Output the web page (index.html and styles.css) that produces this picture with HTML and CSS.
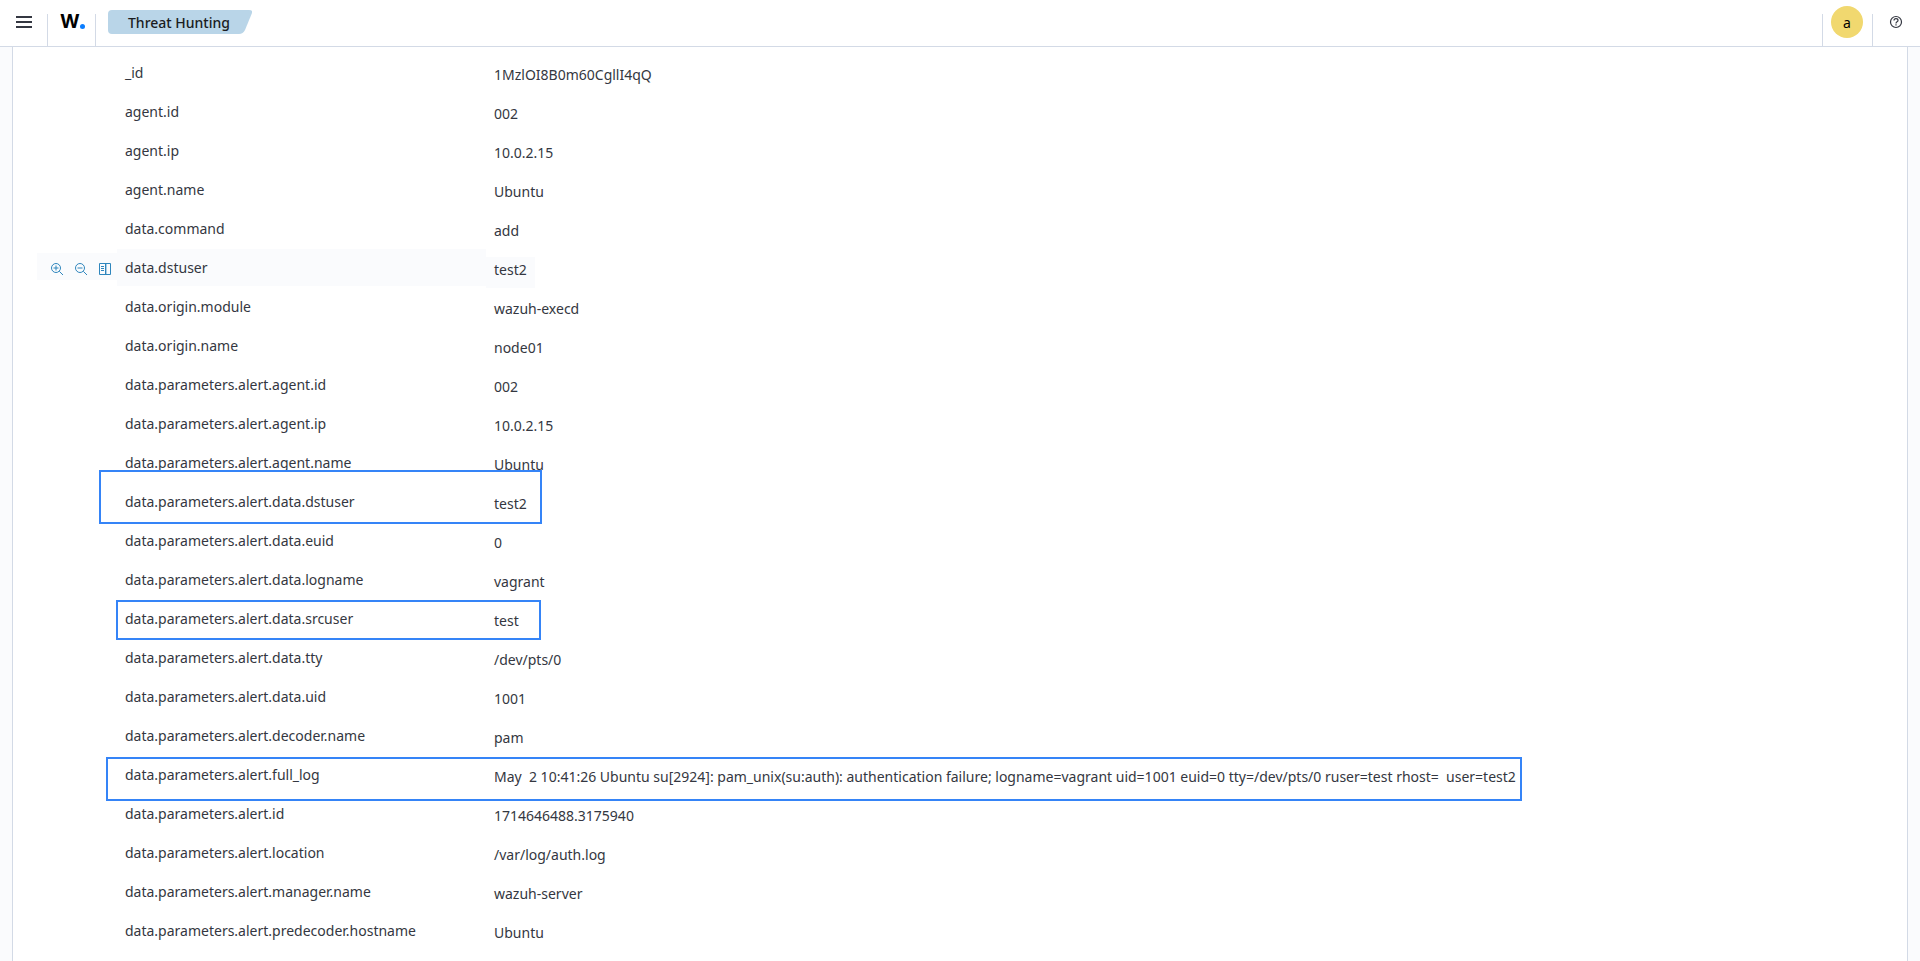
FILE: index.html
```
<!DOCTYPE html>
<html lang="en">
<head>
  <meta charset="UTF-8">
  <title>Threat Hunting</title>
  <link rel="stylesheet" href="styles.css">
</head>
<body>
  <!-- Top bar -->
  <header class="header">
    <div class="header-item header-menu">
      <button class="icon-button" type="button" aria-label="Toggle navigation">
        <svg width="16" height="16" viewBox="0 0 16 16" fill="#343741">
          <path d="M0 2h16v2H0zM0 7h16v2H0zM0 12h16v2H0z"/>
        </svg>
      </button>
    </div>
    <div class="header-item header-logo">
      <a class="logo" href="#" aria-label="Home">W<span class="logo-dot"></span></a>
    </div>
    <nav class="breadcrumbs">
      <a class="breadcrumb" href="#" aria-current="page">
        <svg class="breadcrumb-shape" width="144" height="24" viewBox="0 0 144 24" fill="#b9d5e8">
          <path d="M4 0h137q4 0 3 3l-7 17q-2 4-6 4H4q-4 0-4-4V4q0-4 4-4z"/>
        </svg>
        <span class="breadcrumb-text">Threat Hunting</span>
      </a>
    </nav>
    <div class="header-item header-user">
      <button class="avatar" type="button" aria-label="Account menu">a</button>
    </div>
    <div class="header-item header-help">
      <button class="icon-button" type="button" aria-label="Help menu">
        <svg width="16" height="16" viewBox="0 0 16 16" fill="none" stroke="#343741" stroke-width="1.2">
          <circle cx="8" cy="8" r="5.500"/>
          <path d="M6 6.600c0-1.300.9-1.900 2-1.900s2 .7 2 1.700c0 1.500-2 1.300-2 3"/>
          <path d="M8 10.200v1.200"/>
        </svg>
      </button>
    </div>
  </header>

  <!-- Document details -->
  <main class="panel">
    <table class="doc-table">
      <colgroup>
        <col class="col-actions">
        <col class="col-field">
        <col>
      </colgroup>
      <tbody>
        <tr><td></td><td class="field">_id</td><td class="value"><span>1MzlOI8B0m60CgllI4qQ</span></td></tr>
        <tr><td></td><td class="field">agent.id</td><td class="value"><span>002</span></td></tr>
        <tr><td></td><td class="field">agent.ip</td><td class="value"><span>10.0.2.15</span></td></tr>
        <tr><td></td><td class="field">agent.name</td><td class="value"><span>Ubuntu</span></td></tr>
        <tr><td></td><td class="field">data.command</td><td class="value"><span>add</span></td></tr>
        <tr class="active">
          <td>
            <div class="actions">
              <button class="action" type="button" aria-label="Filter for value">
                <svg width="14" height="14" viewBox="0 0 14 14" fill="none" stroke="currentColor">
                  <circle cx="6" cy="6" r="4.500"/>
                  <path d="M9.300 9.300l3.700 3.700M3.500 6h5M6 3.500v5"/>
                </svg>
              </button>
              <button class="action" type="button" aria-label="Filter out value">
                <svg width="14" height="14" viewBox="0 0 14 14" fill="none" stroke="currentColor">
                  <circle cx="6" cy="6" r="4.500"/>
                  <path d="M9.300 9.300l3.700 3.700M3.500 6h5"/>
                </svg>
              </button>
              <button class="action" type="button" aria-label="Toggle column in table">
                <svg width="14" height="14" viewBox="0 0 14 14" fill="none" stroke="currentColor">
                  <path d="M1.500 1.500h11v11h-11zM7.500 1.500v11M3 4.500h3M3 6.500h3M3 8.500h3"/>
                  <path d="M8.500 1.500v11" stroke-opacity="0.4"/>
                </svg>
              </button>
            </div>
          </td>
          <td class="field">data.dstuser</td>
          <td class="value"><span>test2</span></td>
        </tr>
        <tr><td></td><td class="field">data.origin.module</td><td class="value"><span>wazuh-execd</span></td></tr>
        <tr><td></td><td class="field">data.origin.name</td><td class="value"><span>node01</span></td></tr>
        <tr><td></td><td class="field">data.parameters.alert.agent.id</td><td class="value"><span>002</span></td></tr>
        <tr><td></td><td class="field">data.parameters.alert.agent.ip</td><td class="value"><span>10.0.2.15</span></td></tr>
        <tr><td></td><td class="field">data.parameters.alert.agent.name</td><td class="value"><span>Ubuntu</span></td></tr>
        <tr><td><div class="mark mark-dstuser"></div></td><td class="field">data.parameters.alert.data.dstuser</td><td class="value"><span>test2</span></td></tr>
        <tr><td></td><td class="field">data.parameters.alert.data.euid</td><td class="value"><span>0</span></td></tr>
        <tr><td></td><td class="field">data.parameters.alert.data.logname</td><td class="value"><span>vagrant</span></td></tr>
        <tr><td><div class="mark mark-srcuser"></div></td><td class="field">data.parameters.alert.data.srcuser</td><td class="value"><span>test</span></td></tr>
        <tr><td></td><td class="field">data.parameters.alert.data.tty</td><td class="value"><span>/dev/pts/0</span></td></tr>
        <tr><td></td><td class="field">data.parameters.alert.data.uid</td><td class="value"><span>1001</span></td></tr>
        <tr><td></td><td class="field">data.parameters.alert.decoder.name</td><td class="value"><span>pam</span></td></tr>
        <tr><td><div class="mark mark-log"></div></td><td class="field">data.parameters.alert.full_log</td><td class="value"><span>May  2 10:41:26 Ubuntu su[2924]: pam_unix(su:auth): authentication failure; logname=vagrant uid=1001 euid=0 tty=/dev/pts/0 ruser=test rhost=  user=test2</span></td></tr>
        <tr><td></td><td class="field">data.parameters.alert.id</td><td class="value"><span>1714646488.3175940</span></td></tr>
        <tr><td></td><td class="field">data.parameters.alert.location</td><td class="value"><span>/var/log/auth.log</span></td></tr>
        <tr><td></td><td class="field">data.parameters.alert.manager.name</td><td class="value"><span>wazuh-server</span></td></tr>
        <tr><td></td><td class="field">data.parameters.alert.predecoder.hostname</td><td class="value"><span>Ubuntu</span></td></tr>
      </tbody>
    </table>
  </main>
</body>
</html>
```
FILE: styles.css
```
* {
  box-sizing: border-box;
}
body {
  margin: 0;
  min-height: 100vh;
  display: flex;
  flex-direction: column;
  background-color: #fafbfd;
  color: #343741;
  font-family: "Noto Sans", sans-serif;
  font-size: 14px;
  line-height: 20px;
}
button {
  padding: 0;
  border: none;
  background: none;
  font-family: inherit;
  cursor: pointer;
}
svg {
  display: block;
}

/* Top bar */
.header {
  display: flex;
  height: 47px;
  background-color: #fff;
  border-bottom: 1px solid #d3dae6;
}
.header-item {
  display: flex;
  height: 32px;
  margin-top: 14px;
}
.header-menu {
  width: 48px;
  padding-left: 16px;
  border-right: 1px solid #d3dae6;
}
.header-logo {
  width: 48px;
  padding-left: 12px;
  border-right: 1px solid #d3dae6;
}
.header-user {
  width: 50px;
  padding-left: 8px;
  border-left: 1px solid #d3dae6;
}
.header-help {
  width: 48px;
  padding-left: 15px;
  border-left: 1px solid #d3dae6;
}
.icon-button {
  height: 16px;
}
.logo {
  display: flex;
  align-items: flex-end;
  height: 16px;
  color: #000;
  font-family: Inter, sans-serif;
  font-size: 19px;
  font-weight: 700;
  line-height: 16px;
  text-decoration: none;
}
.logo-dot {
  width: 5px;
  height: 5px;
  margin-bottom: 1px;
  border-radius: 50%;
  background-color: #0b7dff;
}
.breadcrumbs {
  flex: 1;
  padding: 10px 12px;
}
.breadcrumb {
  display: inline-block;
  position: relative;
  height: 24px;
  padding: 3px 20px;
  color: #1a1c21;
  font-weight: 500;
  text-decoration: none;
}
.breadcrumb-shape {
  position: absolute;
  top: 0;
  left: 0;
}
.breadcrumb-text {
  position: relative;
}
.avatar {
  width: 32px;
  height: 32px;
  margin-top: -8px;
  border-radius: 50%;
  background-color: #f1d86f;
  color: #000;
  font-size: 14px;
}

/* Document details */
.panel {
  flex: 1;
  margin: 0 12px;
  padding: 7px 24px;
  background-color: #fff;
  border: 1px solid #d3dae6;
  border-width: 0 1px;
}
.doc-table {
  width: 100%;
  table-layout: fixed;
  border-spacing: 0;
}
.col-actions {
  width: 80px;
}
.col-field {
  width: 369px;
}
.doc-table tr {
  position: relative;
}
.doc-table td {
  height: 39px;
  padding: 0;
  vertical-align: top;
}
.doc-table .field {
  padding: 9px 8px 8px;
  border-bottom: 2px solid #fff;
}
.doc-table .value {
  padding-top: 8px;
}
.value span {
  display: inline-block;
  height: 31px;
  padding: 3px 8px;
  vertical-align: top;
  white-space: pre-wrap;
}
.active .field,
.active .value span,
.actions {
  background-color: #fafbfd;
}
.actions {
  display: flex;
  align-items: center;
  justify-content: center;
  gap: 10px;
  height: 27px;
  margin-top: 4px;
  padding-top: 4px;
  padding-left: 8px;
}
.action {
  color: #2f86bd;
}

/* Frames drawn over the important rows */
.mark {
  position: absolute;
  border: 2px solid #3584f7;
  pointer-events: none;
}
.mark-dstuser {
  top: -13px;
  left: 62px;
  width: 443px;
  height: 54px;
}
.mark-srcuser {
  top: 0;
  left: 79px;
  width: 425px;
  height: 40px;
}
.mark-log {
  top: 1px;
  left: 69px;
  width: 1416px;
  height: 44px;
}
```
